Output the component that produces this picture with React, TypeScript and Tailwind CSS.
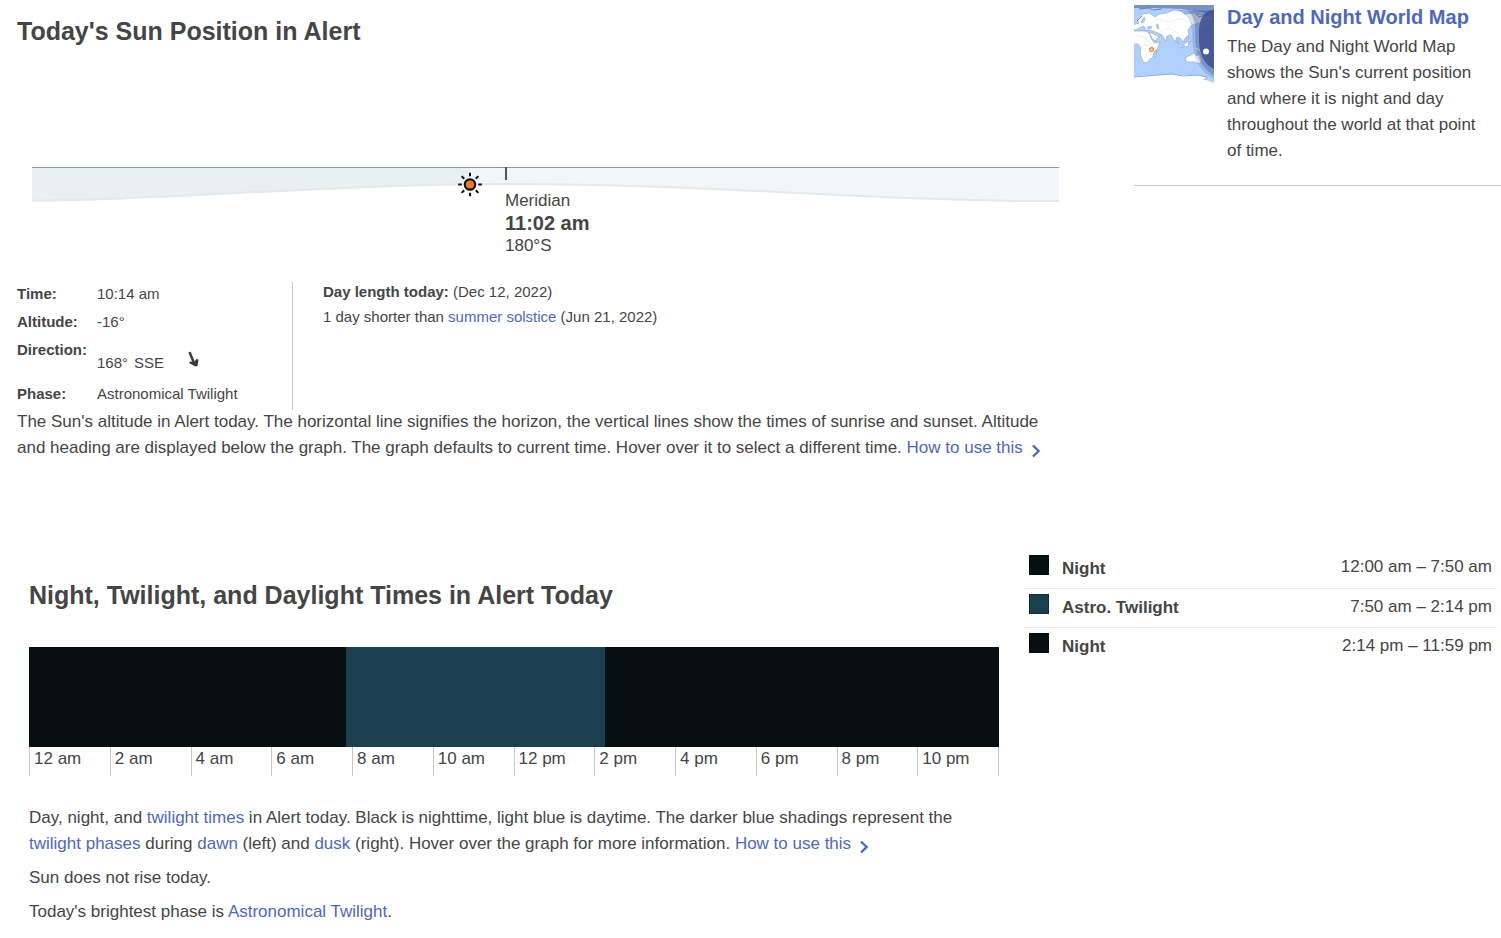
import type { ReactNode } from "react";

function TextLink({ children }: { children: ReactNode }) {
  return (
    <a href="#" className="text-[#5068b7] hover:underline">
      {children}
    </a>
  );
}

function HowToLink() {
  return (
    <a href="#" className="inline-flex items-center gap-2 text-[#5068b7] hover:underline">
      How to use this
      <svg viewBox="0 0 10 14" className="mt-1.5 h-3.5 w-2.5" fill="none" stroke="currentColor" strokeWidth="2.4" aria-hidden="true">
        <path d="M2 1.5 7.6 7 2 12.5" />
      </svg>
    </a>
  );
}

const rays = [0, 45, 90, 135, 180, 225, 270, 315];

function SunGraph() {
  return (
    <svg viewBox="0 0 1027 92" className="block w-full" role="img" aria-label="Altitude of the Sun over the day">
      <path d="M0 4H438V21.5C300 21.5 130 38.500 0 38.500Z" fill="#e8f0f3" />
      <path d="M438 4H1027V38C870 40 700 21.500 500 21.500H438Z" fill="#f1f6fb" />
      <path d="M0 37.500C130 37.500 290 21.500 474 21C690 21 850 39 1027 38" fill="none" stroke="#e3e9ec" strokeWidth="2" />
      <path d="M0 4.500H1027" stroke="#8b9ba3" />
      <path d="M474 4V17" stroke="#555" strokeWidth="2" />
      <g transform="translate(438 21.500)" stroke="#111">
        {rays.map((angle) => (
          <path key={angle} d="M8.200 0H11.800" strokeWidth="2" transform={`rotate(${angle})`} />
        ))}
        <circle r="5.200" fill="#f4772a" strokeWidth="2.200" />
      </g>
      <g fill="#454545" fontFamily="Liberation Sans, Arial, sans-serif">
        <text x="473" y="43" fontSize="17">Meridian</text>
        <text x="473" y="67" fontSize="20" fontWeight="700">11:02 am</text>
        <text x="473" y="88" fontSize="17">180°S</text>
      </g>
    </svg>
  );
}

function WorldMap() {
  return (
    <svg viewBox="0 0 80 78" className="h-[78px] w-20 shrink-0" role="img" aria-label="Day and Night World Map">
      <path fill="#afd0fd" d="M0 0H80V78L72 75 55 70H25L0 72Z" />
      <path fill="#7892c7" d="M0 0H80V9C66 7 55 5 48 4 32 3 14 3 0 3Z" />
      <g fill="#fff" stroke="#8ca3bd" strokeWidth=".6" strokeLinejoin="round">
        <path d="M-2 26 4 26 11 26 15 28 18 35 21 38 26 37 24 43 20 47 19 52 16 54 13 58 9 57 6 48 7 43 4 39-2 39Z" />
        <path d="M15 27 20 29 25 32 21 36 18 33Z" />
        <path d="M-2 20 5 18 3 14 9 9 15 8 21 12 25 9 33 8 40 5 47 6 51 9 59 8 68 10 80 12 78 16 72 15 68 23 65 18 58 20 54 25 55 30 51 33 50 37 46 33 43 32 41 37 37 30 33 31 32 36 28 30 24 28 19 26 15 25 12 25 10 21 5 23 2 25-2 24Z" />
        <path d="M52 56 52 52 57 50 60 48 63 51 65 48 68 55 66 59 61 57 53 57Z" />
        <path d="M22 48 23 45 22 52 20 52Z" />
        <path d="M43 36 49 43 46 42ZM50 39 55 36 54 42 50 41ZM61 41 69 46 65 47 61 44ZM54 31 57 37 55 36Z" />
        <path d="M0 72C8 70 16 71 24 70L38 69 49 71 63 70 73 72 70 75 80 78H0Z" stroke="none" />
      </g>
      <path d="M0 72 24 70 38 69 49 71 63 70 73 72 70 75" fill="none" stroke="#87aedf" />
      <g fill="#afd0fd" stroke="#8ca3bd" strokeWidth=".5">
        <path d="M13 22 17 21 18 23 14 24ZM22 20 24 19 25 24 23 23ZM7 18 9 13 11 12 10 17Z" />
      </g>
      <path d="M1 30 12 33 20 43M12 27 10 40 19 42M9 55 15 46 22 45M22 14 35 17 47 14 61 20M26 27 35 23 45 29" fill="none" stroke="#e4e9ed" strokeWidth=".7" />
      <path d="M5 4 15 3 19 5 28 4M8 11 3 16M70 28 75 21 78 24M62 9 65 12 75 9" fill="none" stroke="#506c9b" strokeWidth=".8" />
      <path fill="#3d5595" fillOpacity=".2" d="M44 5C61 13 57 27 59 41 61 57 67 67 80 74V5Z" />
      <path fill="#3d5595" fillOpacity=".35" d="M54 6C64 14 60 28 62 41 63 55 70 64 80 71V6Z" />
      <path fill="#42508f" fillOpacity=".85" d="M80 5C71 5 66 12 65 24V37C66 51 71 60 80 64Z" />
      <circle cx="17.500" cy="44.500" r="1.800" fill="#fff" stroke="#ff8227" strokeWidth="1.400" />
      <circle cx="72" cy="46.500" r="3" fill="#fff" />
    </svg>
  );
}

const details = [
  { label: "Time:", value: "10:14 am", row: "h-7" },
  { label: "Altitude:", value: "-16°", row: "h-7" },
  { label: "Direction:", value: "168°", row: "h-11" },
  { label: "Phase:", value: "Astronomical Twilight", row: "h-7" },
];

const hours = ["12 am", "2 am", "4 am", "6 am", "8 am", "10 am", "12 pm", "2 pm", "4 pm", "6 pm", "8 pm", "10 pm"];

const phases = [
  { name: "Night", time: "12:00 am – 7:50 am", color: "bg-[#060f11]" },
  { name: "Astro. Twilight", time: "7:50 am – 2:14 pm", color: "bg-[#1a404f]" },
  { name: "Night", time: "2:14 pm – 11:59 pm", color: "bg-[#060f11]" },
];

export default function App() {
  return (
    <div className="bg-white font-['Liberation_Sans',Arial,sans-serif] text-[17px] leading-[26px] text-[#454545]">
      <div className="flex">
        <section className="min-w-0 flex-1 pl-[17px] pt-[13px]">
          <h1 className="text-[25px] font-bold leading-9">Today's Sun Position in Alert</h1>
          <div className="mt-[114px] pl-[15px] pr-4">
            <SunGraph />
          </div>
          <div className="mt-[27px] flex text-[15px] leading-6">
            <dl className="w-[276px] border-r border-[#c8c8c8]">
              {details.map(({ label, value, row }) => (
                <div key={label} className={`flex ${row}`}>
                  <dt className="w-20 font-bold">{label}</dt>
                  {label === "Direction:" ? (
                    <dd className="flex items-center gap-1.5 pt-1.5">
                      <span>{value}</span>
                      <span>SSE</span>
                      <svg viewBox="0 0 14 18" className="mb-2 ml-4 h-[18px] w-3.5" role="img" aria-label="168 degrees">
                        <path d="M3.500 2 8 13" fill="none" stroke="#3a3a3a" strokeWidth="2.400" />
                        <path d="M3 13 4.500 11.300 7.500 12.500 10.500 9 12.500 9.500 11.500 16 9.500 16.500Z" fill="#3a3a3a" />
                      </svg>
                    </dd>
                  ) : (
                    <dd>{value}</dd>
                  )}
                </div>
              ))}
            </dl>
            <div className="-mt-[3px] pl-[30px] leading-[25px]">
              <p><strong>Day length today:</strong> (Dec 12, 2022)</p>
              <p>1 day shorter than <TextLink>summer solstice</TextLink> (Jun 21, 2022)</p>
            </div>
          </div>
          <p className="-mt-px pr-6">
            The Sun's altitude in Alert today. The horizontal line signifies the horizon, the vertical lines show the times of sunrise and sunset. Altitude and heading are displayed below the graph. The graph defaults to current time. Hover over it to select a different time. <HowToLink />
          </p>
        </section>
        <aside className="ml-[59px] w-[367px] shrink-0 pt-[5px]">
          <div className="flex gap-[13px] border-b border-[#c8c8c8] pb-[21px]">
            <WorldMap />
            <div className="-mt-px pr-3">
              <h2 className="text-[20px] font-bold"><TextLink>Day and Night World Map</TextLink></h2>
              <p className="mt-1">The Day and Night World Map shows the Sun's current position and where it is night and day throughout the world at that point of time.</p>
            </div>
          </div>
        </aside>
      </div>

      <div className="mt-[88px] flex pl-[29px] pr-1">
        <section className="min-w-0 flex-1 pt-7">
          <h2 className="text-[25px] font-bold leading-9">Night, Twilight, and Daylight Times in Alert Today</h2>
          <div className="mt-[34px] flex h-[100px] bg-[#060f11]">
            <div className="w-[32.7%]" />
            <div className="w-[26.7%] bg-[#1a404f]" />
          </div>
          <div className="grid h-[29px] grid-cols-12 border-r border-[#c8c8c8]">
            {hours.map((hour) => (
              <span key={hour} className="border-l border-[#c8c8c8] pl-1 leading-6">{hour}</span>
            ))}
          </div>
          <div className="mt-[29px]">
            <p>
              Day, night, and <TextLink>twilight times</TextLink> in Alert today. Black is nighttime, light blue is daytime. The darker blue shadings represent the <TextLink>twilight phases</TextLink> during <TextLink>dawn</TextLink> (left) and <TextLink>dusk</TextLink> (right). Hover over the graph for more information. <HowToLink />
            </p>
            <p className="mt-2">Sun does not rise today.</p>
            <p className="mt-2">Today's brightest phase is <TextLink>Astronomical Twilight</TextLink>.</p>
          </div>
        </section>
        <table className="ml-[25px] w-[473px] shrink-0 self-start">
          <tbody>
            {phases.map(({ name, time, color }) => (
              <tr key={time} className="h-[39px] border-b border-[#ebebeb] last:border-0">
                <th scope="row" className="pl-[5px] pt-px text-left font-bold">
                  <span className="flex gap-[13px]">
                    <span className={`-mt-px size-5 border border-black/30 ${color}`} />
                    {name}
                  </span>
                </th>
                <td className="pb-0.5 pr-[5px] text-right">{time}</td>
              </tr>
            ))}
          </tbody>
        </table>
      </div>
    </div>
  );
}
